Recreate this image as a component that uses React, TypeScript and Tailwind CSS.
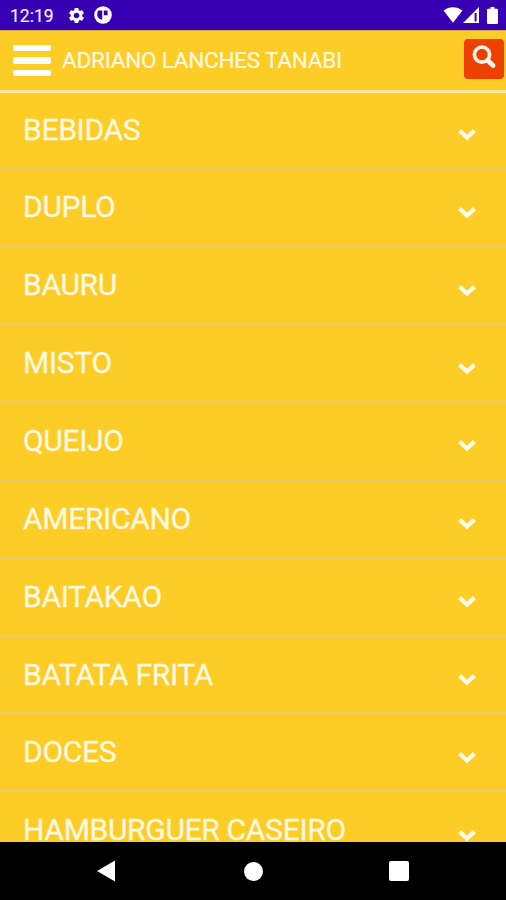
import { MdSettings } from "react-icons/md";

const CATEGORIES = [
  "BEBIDAS",
  "DUPLO",
  "BAURU",
  "MISTO",
  "QUEIJO",
  "AMERICANO",
  "BAITAKAO",
  "BATATA FRITA",
  "DOCES",
  "HAMBURGUER CASEIRO",
];

function StatusBar() {
  return (
    <div className="flex h-[30px] shrink-0 items-center justify-between bg-[#3700b3] pl-[10px] pr-2 text-[#eeeaff]">
      <div className="flex items-center">
        <span className="w-[44px] pt-[3px] text-[17.5px] leading-none [-webkit-text-stroke:0.2px_#eeeaff]">12:19</span>
        <MdSettings size={19} className="ml-[13px] text-white" />
        <svg viewBox="0 0 18 18" width="18" height="18" className="ml-2" aria-hidden>
          <circle cx="9" cy="9" r="8.8" fill="#fff" />
          <path d="M4.2 4.400h4v9.400c-3.200-.3-5-2.300-5-5.200 0-1.600.4-3 1-4.200zM9.800 4.400h3.800v4.800H9.800z" fill="#3700b3" />
        </svg>
      </div>
      <div className="flex items-center">
        <svg viewBox="0 0 20 16" width="20" height="16" aria-hidden>
          <path d="M0.500 3.500C6-1 14-1 19.500 3.500L10 15.800z" fill="#fff" />
        </svg>
        <svg viewBox="0 0 16 16" width="16" height="16" aria-hidden>
          <path d="M0 16 16 0v16z" fill="#fff" />
          <path d="M11.600 6h2v8.500h-2z" fill="#3700b3" />
        </svg>
        <svg viewBox="0 0 11 17" width="11" height="17" className="ml-2" aria-hidden>
          <path d="M3.500 0h4v1.700H10a1 1 0 0 1 1 1V16a1 1 0 0 1-1 1H1a1 1 0 0 1-1-1V2.700a1 1 0 0 1 1-1h2.500z" fill="#fff" />
        </svg>
      </div>
    </div>
  );
}

function Header() {
  return (
    <header className="relative z-10 flex h-[63px] shrink-0 items-center border-b-[3px] border-t border-[#fee59a] border-t-[#d9ab45] bg-[#fdcc27] pl-[13px] pr-[2px]">
      <button type="button" aria-label="Menu" className="flex w-[38px] flex-col gap-[6px]">
        <span className="h-[6.6px] rounded-[2px] bg-white" />
        <span className="h-[6.6px] rounded-[2px] bg-white" />
        <span className="h-[6.6px] rounded-[2px] bg-white" />
      </button>
      <h1 className="ml-[11px] whitespace-nowrap text-[22.5px] leading-none tracking-[-0.22px] text-[#fff9e2] [-webkit-text-stroke:0.2px_#fff9e2]">
        ADRIANO LANCHES TANABI
      </h1>
      <button
        type="button"
        aria-label="Buscar"
        className="ml-auto mt-[-3px] flex h-10 w-10 items-center justify-center rounded-[4px] bg-[#ee4000]"
      >
        <svg viewBox="0 0 40 40" width="40" height="40" fill="none" stroke="#fff3ea" aria-hidden>
          <circle cx="18" cy="15.600" r="7.600" strokeWidth="3.700" />
          <path d="m23.600 21.200 5.400 5.300" strokeWidth="4.800" strokeLinecap="round" />
        </svg>
      </button>
    </header>
  );
}

function CategoryRow({ name }: { name: string }) {
  return (
    <li className="flex h-[77.87px] shrink-0 items-center justify-between border-b-2 border-[#e9cb7c] pl-[23px] pr-[29px]">
      <span className="whitespace-nowrap text-[30px] leading-none tracking-[-0.3px] text-[#fff9e2] [-webkit-text-stroke:0.3px_#fff9e2]">
        {name}
      </span>
      <svg viewBox="0 0 20 14" width="20" height="14" className="mt-[9px]" aria-hidden>
        <path d="m2.600 3.600 7.400 7 7.400-7" fill="none" stroke="#fffbe8" strokeWidth="4.200" />
      </svg>
    </li>
  );
}

function NavBar() {
  return (
    <nav className="flex h-[58px] shrink-0 items-center bg-black pl-[96px] pr-[97px]">
      <svg viewBox="0 0 20 22" width="20" height="22" aria-hidden>
        <path d="M1 11 19 0.500v21z" fill="#fff" />
      </svg>
      <span className="ml-[128px] h-[19px] w-[19px] rounded-full bg-white" />
      <span className="ml-auto h-5 w-5 rounded-[2px] bg-white" />
    </nav>
  );
}

export default function App() {
  return (
    <div className="flex h-[900px] w-[506px] flex-col overflow-hidden bg-[#fdcc27] font-[Roboto,sans-serif]">
      <StatusBar />
      <Header />
      {/* the last row runs under the navigation bar */}
      <ul className="-mt-[1.4px] flex min-h-0 flex-1 flex-col overflow-hidden">
        {CATEGORIES.map((name) => (
          <CategoryRow key={name} name={name} />
        ))}
      </ul>
      <NavBar />
    </div>
  );
}
